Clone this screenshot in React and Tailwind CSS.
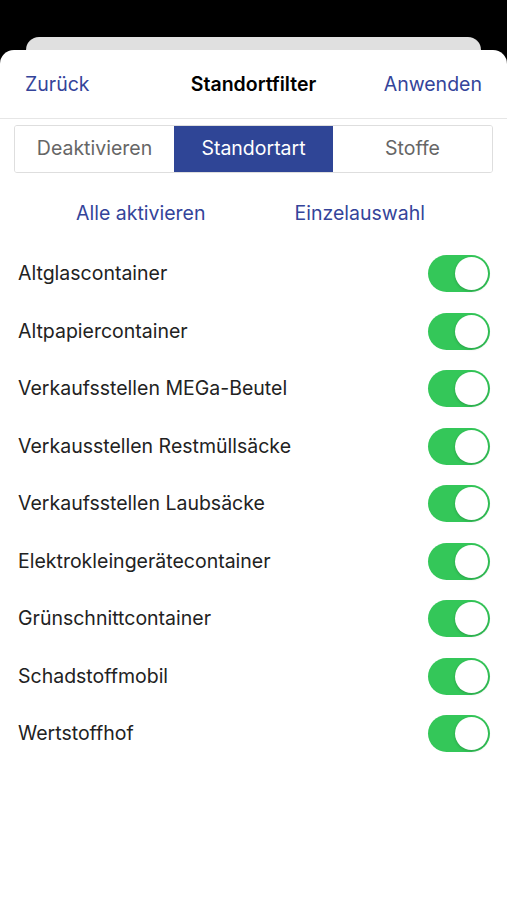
import React, { useState } from 'react';

const items = [
  'Altglascontainer',
  'Altpapiercontainer',
  'Verkaufsstellen MEGa-Beutel',
  'Verkausstellen Restmüllsäcke',
  'Verkaufsstellen Laubsäcke',
  'Elektrokleingerätecontainer',
  'Grünschnittcontainer',
  'Schadstoffmobil',
  'Wertstoffhof',
];

const tabs = ['Deaktivieren', 'Standortart', 'Stoffe'];

const Toggle = ({ on, onClick }) => (
  <button
    onClick={onClick}
    className={`relative w-[62px] h-[37px] rounded-full transition ${on ? 'bg-[#34c759]' : 'bg-[#e5e5ea]'}`}
  >
    <span
      className={`absolute top-[2px] w-[33px] h-[33px] rounded-full bg-white shadow-[0_1px_3px_rgba(0,0,0,0.2)] ${on ? 'left-[27px]' : 'left-[2px]'}`}
    />
  </button>
);

const App = () => {
  const [active, setActive] = useState(1);
  const [toggles, setToggles] = useState(items.map(() => true));

  // flip one switch
  const flip = (i) => setToggles(toggles.map((t, idx) => (idx === i ? !t : t)));

  return (
    <div className="w-[507px] h-[900px] bg-black flex flex-col font-['Inter',sans-serif] overflow-hidden">
      <div className="h-[37px]" />
      <div className="mx-[26px] h-[13px] rounded-t-[14px] bg-[#e0e0e0]" />
      <div className="flex-1 bg-white rounded-t-[14px] flex flex-col">
        {/* Header */}
        <div className="h-[69px] pt-[1px] grid grid-cols-3 items-center px-[25px] border-b border-[#e6e6e6]">
          <span className="justify-self-start text-[19.5px] text-[#34449a]">Zurück</span>
          <span className="justify-self-center text-[19.5px] font-semibold text-black">Standortfilter</span>
          <span className="justify-self-end text-[19.5px] text-[#34449a]">Anwenden</span>
        </div>

        {/* Segment */}
        <div className="mx-[14px] mt-[6px] h-[48px] flex border border-[#dedede] rounded-[3px] overflow-hidden">
          {tabs.map((tab, i) => (
            <button
              key={tab}
              onClick={() => setActive(i)}
              className={`flex-1 text-[19.5px] ${active === i ? 'bg-[#2f4596] text-white' : 'bg-white text-[#666]'}`}
            >
              {tab}
            </button>
          ))}
        </div>

        {/* Links */}
        <div className="mt-[9px] h-[63px] flex items-center pl-[76px] gap-[89px]">
          <span className="text-[19.5px] text-[#34449a]">Alle aktivieren</span>
          <span className="text-[19.5px] text-[#34449a]">Einzelauswahl</span>
        </div>

        {/* Rows */}
        <div className="flex flex-col">
          {items.map((item, i) => (
            <div key={item} className="h-[57.5px] flex items-center justify-between pl-[18px] pr-[17px]">
              <span className="text-[19.5px] text-[#222]">{item}</span>
              <Toggle on={toggles[i]} onClick={() => flip(i)} />
            </div>
          ))}
        </div>
      </div>
    </div>
  );
};

export default App;
